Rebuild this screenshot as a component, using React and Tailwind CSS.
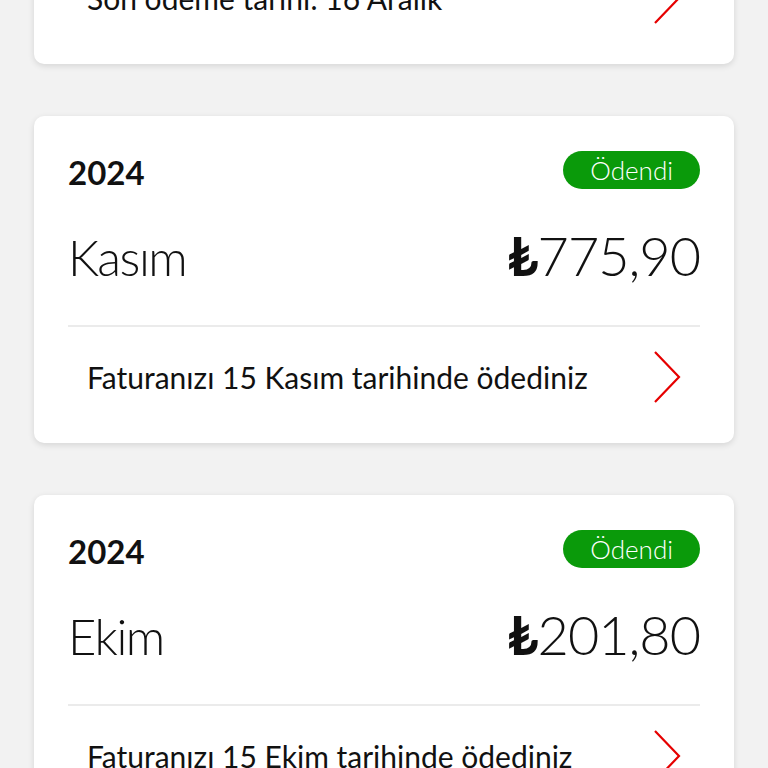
import React from "react";

const bills = [
  {
    year: "2024",
    month: "Aralık",
    amount: "649,90",
    status: "Ödenmedi",
    paid: false,
    note: "Son ödeme tarihi: 16 Aralık",
  },
  {
    year: "2024",
    month: "Kasım",
    amount: "775,90",
    status: "Ödendi",
    paid: true,
    note: "Faturanızı 15 Kasım tarihinde ödediniz",
  },
  {
    year: "2024",
    month: "Ekim",
    amount: "201,80",
    status: "Ödendi",
    paid: true,
    note: "Faturanızı 15 Ekim tarihinde ödediniz",
  },
];

function Chevron() {
  return (
    <svg width="28" height="52" viewBox="0 0 28 52" fill="none">
      <path d="M2 1 L26 26 L2 51" stroke="#e60000" strokeWidth="2.2" />
    </svg>
  );
}

function BillCard({ bill }) {
  return (
    <div className="rounded-[10px] bg-white px-[34px] pt-[35px] shadow-[0_2px_6px_rgba(0,0,0,0.12)]">
      {/* YEAR + STATUS */}
      <div className="flex h-[38px] items-center justify-between">
        <span className="mt-[4px] text-[33px] font-bold leading-none text-[#111]">
          {bill.year}
        </span>
        <span
          className={
            bill.paid
              ? "flex h-[38px] items-center rounded-full bg-[#0a9a0a] px-[27px] text-[26px] font-light text-white"
              : "flex h-[38px] items-center rounded-full bg-[#e60000] px-[27px] text-[26px] font-light text-white"
          }
        >
          {bill.status}
        </span>
      </div>

      {/* MONTH + AMOUNT */}
      <div className="mt-[35px] mb-[37px] flex h-[64px] items-baseline justify-between">
        <span className="text-[49px] font-light leading-[64px] tracking-[-1.5px] text-[#111]">
          {bill.month}
        </span>
        <span className="text-[54px] font-light leading-[64px] tracking-[-1px] text-[#111]">
          <span className="font-bold">₺</span>
          {bill.amount}
        </span>
      </div>

      <div className="h-[2px] bg-[#ebebeb]" />

      {/* NOTE */}
      <div className="flex items-center justify-between pt-[24px] pb-[40px] pl-[19px] pr-[19px]">
        <span className="text-[30px] leading-[52px] text-[#111]">{bill.note}</span>
        <Chevron />
      </div>
    </div>
  );
}

export default function App() {
  return (
    <div className="h-[768px] overflow-hidden bg-[#f2f2f2] px-[34px] font-['Lato',sans-serif]">
      <div className="mt-[-263px] flex flex-col gap-[52px]">
        {bills.map((bill) => (
          <BillCard key={bill.month} bill={bill} />
        ))}
      </div>
    </div>
  );
}
